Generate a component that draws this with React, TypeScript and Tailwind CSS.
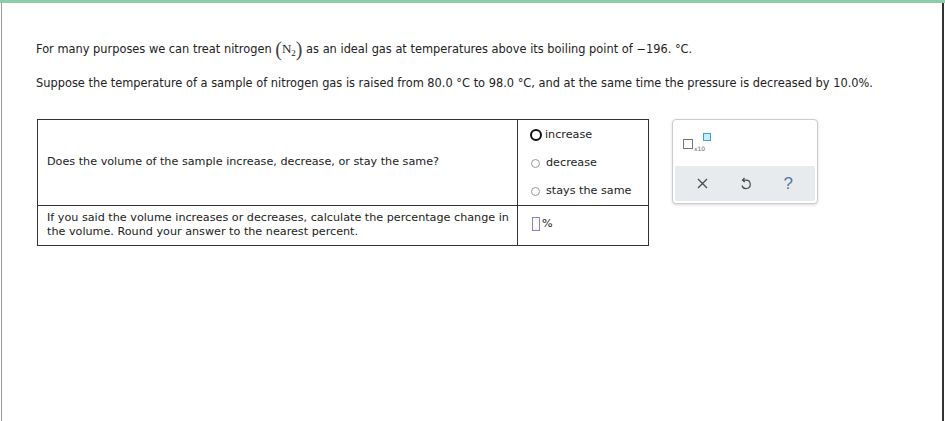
import React from "react";

const font = { fontFamily: "'DejaVu Sans', Verdana, sans-serif" };

export default function App() {
  return (
    <div className="w-[945px] h-[421px] bg-white relative overflow-hidden text-[#222]" style={font}>
      <div className="h-[3px] bg-[#8ccfa6]" />
      <div className="absolute left-[1px] top-[3px] bottom-0 w-[1px] bg-[#9a9a9a]" />
      <div className="absolute right-[1px] top-[3px] bottom-0 w-[2px] bg-[#333]" />
      <div className="pl-[36px] pt-[35px] text-[11.4px] leading-[16px]">
        <div className="flex items-center h-[22px]">
          <span>For many purposes we can treat nitrogen&nbsp;</span>
          <span className="flex items-center" style={{ fontFamily: "'Liberation Serif', serif" }}>
            <span className="text-[20px] leading-[20px] text-[#444] font-light">(</span>
            <span className="text-[13px]">N</span>
            <span className="text-[9px] relative top-[4px]">2</span>
            <span className="text-[20px] leading-[20px] text-[#444] font-light">)</span>
          </span>
          <span>&nbsp;as an ideal gas at temperatures above its boiling point of −196. °C.</span>
        </div>
        <div className="mt-[15px]">
          Suppose the temperature of a sample of nitrogen gas is raised from 80.0 °C to 98.0 °C, and at the same time the pressure is decreased by 10.0%.
        </div>
      </div>
      <div className="flex items-start ml-[37px] mt-[28px] gap-[23px]">
        <div className="w-[612px] border border-[#333] text-[11.2px]">
          <div className="flex h-[86px] border-b border-[#333]">
            <div className="w-[480px] border-r border-[#333] flex items-center pl-[9px]">
              Does the volume of the sample increase, decrease, or stay the same?
            </div>
            <div className="flex-1 flex flex-col pl-[12px] pt-[7px]">
              <div className="flex items-center h-[16px]">
                <span className="w-[12px] h-[12px] rounded-full border-[2.5px] border-[#111] mr-[3px]" />
                <span>increase</span>
              </div>
              <div className="flex items-center h-[16px] mt-[12px]">
                <span className="w-[9px] h-[9px] rounded-full border border-[#999] ml-[1px] mr-[6px]" />
                <span>decrease</span>
              </div>
              <div className="flex items-center h-[16px] mt-[12px]">
                <span className="w-[9px] h-[9px] rounded-full border border-[#999] ml-[1px] mr-[6px]" />
                <span>stays the same</span>
              </div>
            </div>
          </div>
          <div className="flex h-[39px]">
            <div className="w-[480px] border-r border-[#333] pl-[9px] pt-[5px] leading-[14px] whitespace-nowrap overflow-hidden">
              If you said the volume increases or decreases, calculate the percentage change in
              <br />
              the volume. Round your answer to the nearest percent.
            </div>
            <div className="flex-1 flex items-start pl-[14px] pt-[11px]">
              <span className="w-[8px] h-[14px] border-[1.5px] border-[#8a7fd6] mr-[2px]" />
              <span className="leading-[14px]">%</span>
            </div>
          </div>
        </div>
        <div className="w-[146px] h-[85px] border border-[#c9ccd0] rounded-[4px] bg-white shadow-[0_1px_3px_rgba(0,0,0,0.15)] p-[2px] flex flex-col">
          <div className="flex-1 relative">
            <span className="absolute left-[8px] top-[17px] w-[10px] h-[10px] border border-[#777]" />
            <span className="absolute left-[19px] top-[24px] text-[6px] leading-[6px] text-[#666]">x10</span>
            <span className="absolute left-[28px] top-[11px] w-[8px] h-[8px] border-[1.5px] border-[#3aa3c9] bg-[#c6eefa]" />
          </div>
          <div className="h-[35px] bg-[#e8ebee] rounded-[2px] flex items-center justify-around px-[6px] text-[#555]">
            <svg width="11" height="11" viewBox="0 0 11 11"><path d="M1 1 L10 10 M10 1 L1 10" stroke="#4a4a4a" strokeWidth="1.3" /></svg>
            <svg width="12" height="14" viewBox="0 0 12 14"><path d="M4.5 1 L2.5 3.2 L4.8 5 M2.8 3.2 H6 A4.2 4.2 0 1 1 2 8.5" fill="none" stroke="#4a4a4a" strokeWidth="1.2" /></svg>
            <span className="text-[17px] text-[#5577a0] leading-none" style={{ fontFamily: "'Liberation Sans', sans-serif" }}>?</span>
          </div>
        </div>
      </div>
    </div>
  );
}
